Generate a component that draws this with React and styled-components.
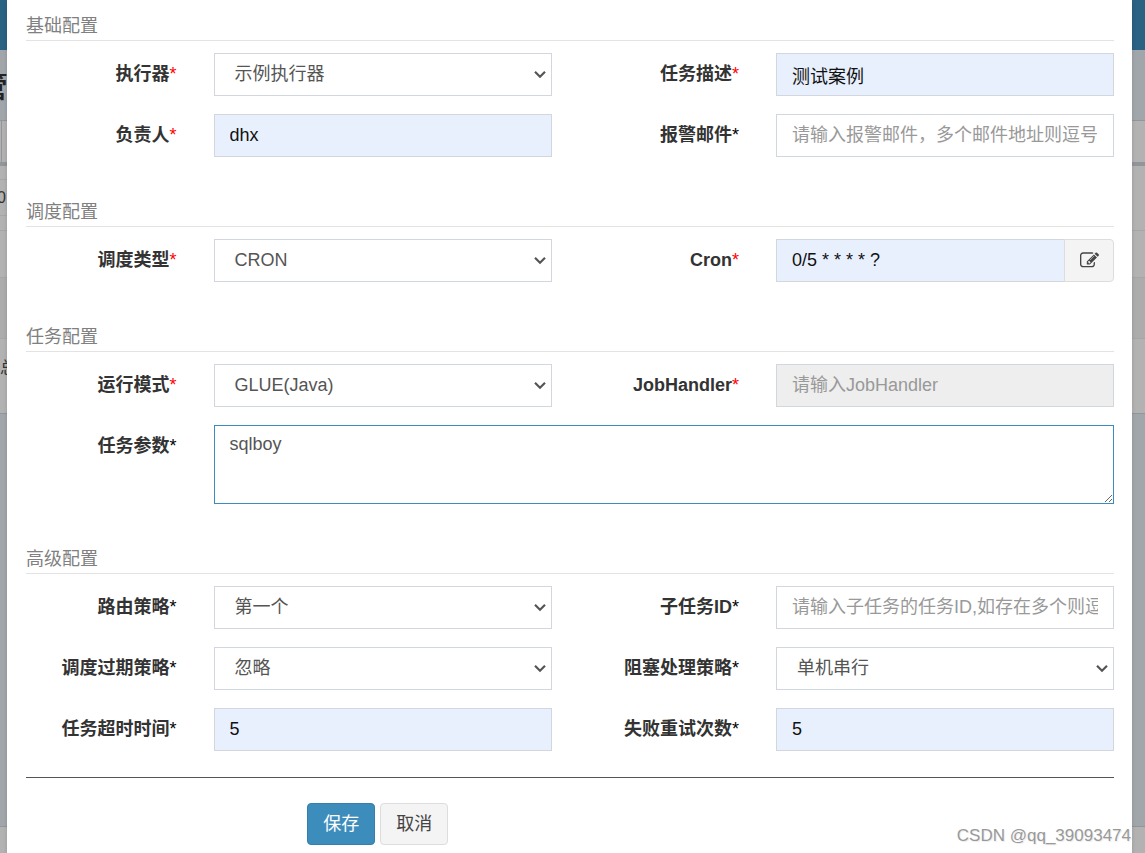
import React, { useState } from 'react'
import styled, { createGlobalStyle, css } from 'styled-components'

const GlobalStyle = createGlobalStyle`
    * {
        box-sizing: border-box;
    }

    body {
        margin: 0;
        background: #a1a6aa;
        color: #333;
        font-family: 'Liberation Sans', 'Noto Sans CJK SC', sans-serif;
        font-size: 18px;
        line-height: 25px;
    }

    button,
    input,
    select,
    textarea {
        font: inherit;
    }
`

const Page = styled.div`
    position: relative;
    min-height: 100vh;
    overflow: hidden;
`

const Behind = styled.div`
    position: absolute;
    inset: 0;
    display: flex;
    flex-direction: column;
    overflow: hidden;
    white-space: nowrap;
`

const TopBar = styled.div`
    flex: none;
    height: 50px;
    background: #2a6284;
`

const PageTitle = styled.div`
    flex: none;
    height: 70px;
    margin-left: -22px;
    color: #222;
    font-size: 30px;
    font-weight: 500;
    line-height: 74px;
`

const FilterBar = styled.div`
    flex: none;
    height: 42px;
    border-top: 1px solid #929599;
    background: #b2b2b2;
    padding-left: 1px;

    &::before {
        content: '';
        display: block;
        width: 1px;
        height: 100%;
        background: #929599;
    }
`

const ListBox = styled.div`
    flex: none;
    height: 252px;
    border-top: 4px solid #92959b;
    border-bottom: 1px solid #929599;
    background: #b2b2b2;
`

const ListRow = styled.div`
    width: ${(p) => (p.$half ? '50%' : 'auto')};
    height: ${(p) => p.$height}px;
    margin-left: ${(p) => p.$shift || 0}px;
    border-bottom: 1px solid #a6a6a6;
    background: ${(p) => (p.$dark ? '#acacac' : '#b2b2b2')};
    font-size: 16px;
    line-height: ${(p) => p.$height}px;

    &:last-child {
        border-bottom: 0;
    }
`

const Footer = styled.div`
    height: 27px;
    margin-top: auto;
    border-top: 1px solid #929599;
    background: #b2b2b2;
`

const Dialog = styled.div`
    position: relative;
    min-height: 100vh;
    margin: 0 13px 0 7px;
    padding: 14px 0 8px;
    background: #fff;
    box-shadow: 0 2px 4px rgba(0, 0, 0, 0.15);
`

const Section = styled.section`
    & + & {
        padding-top: 25px;
    }
`

const SectionTitle = styled.h2`
    margin: 0 18px 12px 19px;
    padding-bottom: 1px;
    border-bottom: 1px solid #e3e3e3;
    color: #808080;
    font-size: 18px;
    font-weight: 400;
    line-height: 25px;
`

const Row = styled.div`
    display: grid;
    grid-template-columns: ${(p) =>
        p.$wide
            ? 'minmax(0, 2fr) minmax(0, 10fr)'
            : 'minmax(0, 2fr) minmax(0, 4fr) minmax(0, 2fr) minmax(0, 4fr)'};
    margin-bottom: 18px;
`

const Label = styled.label`
    padding: 0 18px;
    font-weight: 700;
    line-height: 43px;
    text-align: right;
    white-space: nowrap;
`

const Star = styled.span`
    color: ${(p) => (p.$required ? '#f00' : '#000')};
    font-weight: 400;
`

const Cell = styled.div`
    display: flex;
    padding: 0 18px 0 19px;
`

const control = css`
    flex: 1;
    min-width: 0;
    height: 43px;
    margin: 0;
    border: 1px solid #d2d6de;
    border-radius: 0;
    outline: none;
    background: #fff;
    color: #555;
`

const Input = styled.input`
    ${control}
    padding: 0 15px;

    ${(p) =>
        p.$filled &&
        css`
            background: #e8f0fe;
            color: #111;
        `}

    &:disabled {
        background: #eee;
    }

    &::placeholder {
        color: #999;
    }
`

const TextArea = styled.textarea`
    ${control}
    height: 79px;
    padding: 6px 15px;
    border-color: #3c8dbc;
    resize: vertical;
`

const SelectBox = styled.div`
    position: relative;
    display: flex;
    flex: 1;
    min-width: 0;

    svg {
        position: absolute;
        top: 17px;
        right: 6px;
        pointer-events: none;
    }
`

const StyledSelect = styled.select`
    ${control}
    padding: 0 32px 0 20px;
    appearance: none;
`

const AddonButton = styled.button`
    display: flex;
    align-items: center;
    justify-content: center;
    width: 50px;
    margin-left: -1px;
    padding: 0;
    border: 1px solid #ddd;
    border-radius: 0 4px 4px 0;
    background: #f4f4f4;
    color: #444;
    cursor: pointer;
`

const Divider = styled.hr`
    margin: 26px 18px 25px 19px;
    border: 0;
    border-top: 1px solid #555;
`

const Actions = styled.div`
    display: flex;
    gap: 5px;
    padding-left: calc(25% + 19px);
`

const Button = styled.button`
    height: 42px;
    padding: 0 15px;
    border: 1px solid ${(p) => (p.$primary ? '#367fa9' : '#ddd')};
    border-radius: 4px;
    background: ${(p) => (p.$primary ? '#3c8dbc' : '#f4f4f4')};
    color: ${(p) => (p.$primary ? '#fff' : '#444')};
    cursor: pointer;
`

const Watermark = styled.div`
    position: absolute;
    right: 14px;
    bottom: 5px;
    color: #999;
    font-size: 17px;
    text-shadow: 1px 1px 0 #eee;
`

const FieldLabel = ({ id, text, required }) => (
    <Label htmlFor={id}>
        {text}
        <Star $required={required}>*</Star>
    </Label>
)

const TextField = ({ id, label, required, value = '', filled, ...rest }) => {
    const [text, setText] = useState(value)

    return (
        <>
            <FieldLabel id={id} text={label} required={required} />
            <Cell>
                <Input
                    id={id}
                    value={text}
                    $filled={filled}
                    onChange={(e) => setText(e.target.value)}
                    {...rest}
                />
            </Cell>
        </>
    )
}

const SelectField = ({ id, label, required, options }) => (
    <>
        <FieldLabel id={id} text={label} required={required} />
        <Cell>
            <SelectBox>
                <StyledSelect id={id}>
                    {options.map((option) => (
                        <option key={option}>{option}</option>
                    ))}
                </StyledSelect>
                <svg width="12" height="9" viewBox="0 0 12 9" fill="none">
                    <path
                        d="M1 1.7 6 6.7 11 1.7"
                        stroke="#555"
                        strokeWidth="2.2"
                    />
                </svg>
            </SelectBox>
        </Cell>
    </>
)

const EditIcon = () => (
    <svg width="19" height="19" viewBox="0 0 1792 1792" fill="currentColor">
        <path d="M888 1184l116-116-152-152-116 116v56h96v96h56zm440-720q-16-16-33 1l-350 350q-17 17-1 33t33-1l350-350q17-17 1-33zm80 594v190q0 119-84.5 203.5t-203.5 84.5h-832q-119 0-203.5-84.5t-84.5-203.5v-832q0-119 84.5-203.5t203.5-84.5h832q63 0 117 25 15 7 18 23 3 17-9 29l-49 49q-14 14-32 8-23-6-45-6h-832q-66 0-113 47t-47 113v832q0 66 47 113t113 47h832q66 0 113-47t47-113v-126q0-13 9-22l64-64q15-15 35-7t20 29zm-96-738l288 288-672 672h-288v-288zm444 132l-92 92-288-288 92-92q28-28 68-28t68 28l152 152q28 28 28 68t-28 68z" />
    </svg>
)

export default function App() {
    const [cron, setCron] = useState('0/5 * * * * ?')
    const [param, setParam] = useState('sqlboy')

    return (
        <Page>
            <GlobalStyle />
            <Behind aria-hidden="true">
                <TopBar />
                <PageTitle>管</PageTitle>
                <FilterBar />
                <ListBox>
                    <ListRow $height={14} $half />
                    <ListRow $height={36} $half $shift={-3}>
                        0
                    </ListRow>
                    <ListRow $height={15} />
                    <ListRow $height={47} />
                    <ListRow $height={61} $dark />
                    <ListRow $height={58}>总</ListRow>
                </ListBox>
                <Footer />
            </Behind>
            <Dialog role="dialog">
                <form onSubmit={(e) => e.preventDefault()}>
                    <Section>
                        <SectionTitle>基础配置</SectionTitle>
                        <Row>
                            <SelectField
                                id="jobGroup"
                                label="执行器"
                                required
                                options={['示例执行器']}
                            />
                            <TextField
                                id="jobDesc"
                                label="任务描述"
                                required
                                filled
                                value="测试案例"
                            />
                        </Row>
                        <Row>
                            <TextField
                                id="author"
                                label="负责人"
                                required
                                filled
                                value="dhx"
                            />
                            <TextField
                                id="alarmEmail"
                                label="报警邮件"
                                placeholder="请输入报警邮件，多个邮件地址则逗号分隔"
                            />
                        </Row>
                    </Section>
                    <Section>
                        <SectionTitle>调度配置</SectionTitle>
                        <Row>
                            <SelectField
                                id="scheduleType"
                                label="调度类型"
                                required
                                options={['CRON']}
                            />
                            <FieldLabel id="cron" text="Cron" required />
                            <Cell>
                                <Input
                                    id="cron"
                                    $filled
                                    value={cron}
                                    onChange={(e) => setCron(e.target.value)}
                                />
                                <AddonButton type="button" aria-label="Cron">
                                    <EditIcon />
                                </AddonButton>
                            </Cell>
                        </Row>
                    </Section>
                    <Section>
                        <SectionTitle>任务配置</SectionTitle>
                        <Row>
                            <SelectField
                                id="glueType"
                                label="运行模式"
                                required
                                options={['GLUE(Java)']}
                            />
                            <TextField
                                id="handler"
                                label="JobHandler"
                                required
                                disabled
                                placeholder="请输入JobHandler"
                            />
                        </Row>
                        <Row $wide>
                            <FieldLabel id="param" text="任务参数" />
                            <Cell>
                                <TextArea
                                    id="param"
                                    value={param}
                                    onChange={(e) => setParam(e.target.value)}
                                />
                            </Cell>
                        </Row>
                    </Section>
                    <Section>
                        <SectionTitle>高级配置</SectionTitle>
                        <Row>
                            <SelectField
                                id="routeStrategy"
                                label="路由策略"
                                options={['第一个']}
                            />
                            <TextField
                                id="childJobId"
                                label="子任务ID"
                                placeholder="请输入子任务的任务ID,如存在多个则逗号分隔"
                            />
                        </Row>
                        <Row>
                            <SelectField
                                id="misfire"
                                label="调度过期策略"
                                options={['忽略']}
                            />
                            <SelectField
                                id="block"
                                label="阻塞处理策略"
                                options={['单机串行']}
                            />
                        </Row>
                        <Row>
                            <TextField
                                id="timeout"
                                label="任务超时时间"
                                filled
                                value="5"
                            />
                            <TextField
                                id="retry"
                                label="失败重试次数"
                                filled
                                value="5"
                            />
                        </Row>
                    </Section>
                    <Divider />
                    <Actions>
                        <Button type="submit" $primary>
                            保存
                        </Button>
                        <Button type="button">取消</Button>
                    </Actions>
                </form>
            </Dialog>
            <Watermark>CSDN @qq_39093474</Watermark>
        </Page>
    )
}
